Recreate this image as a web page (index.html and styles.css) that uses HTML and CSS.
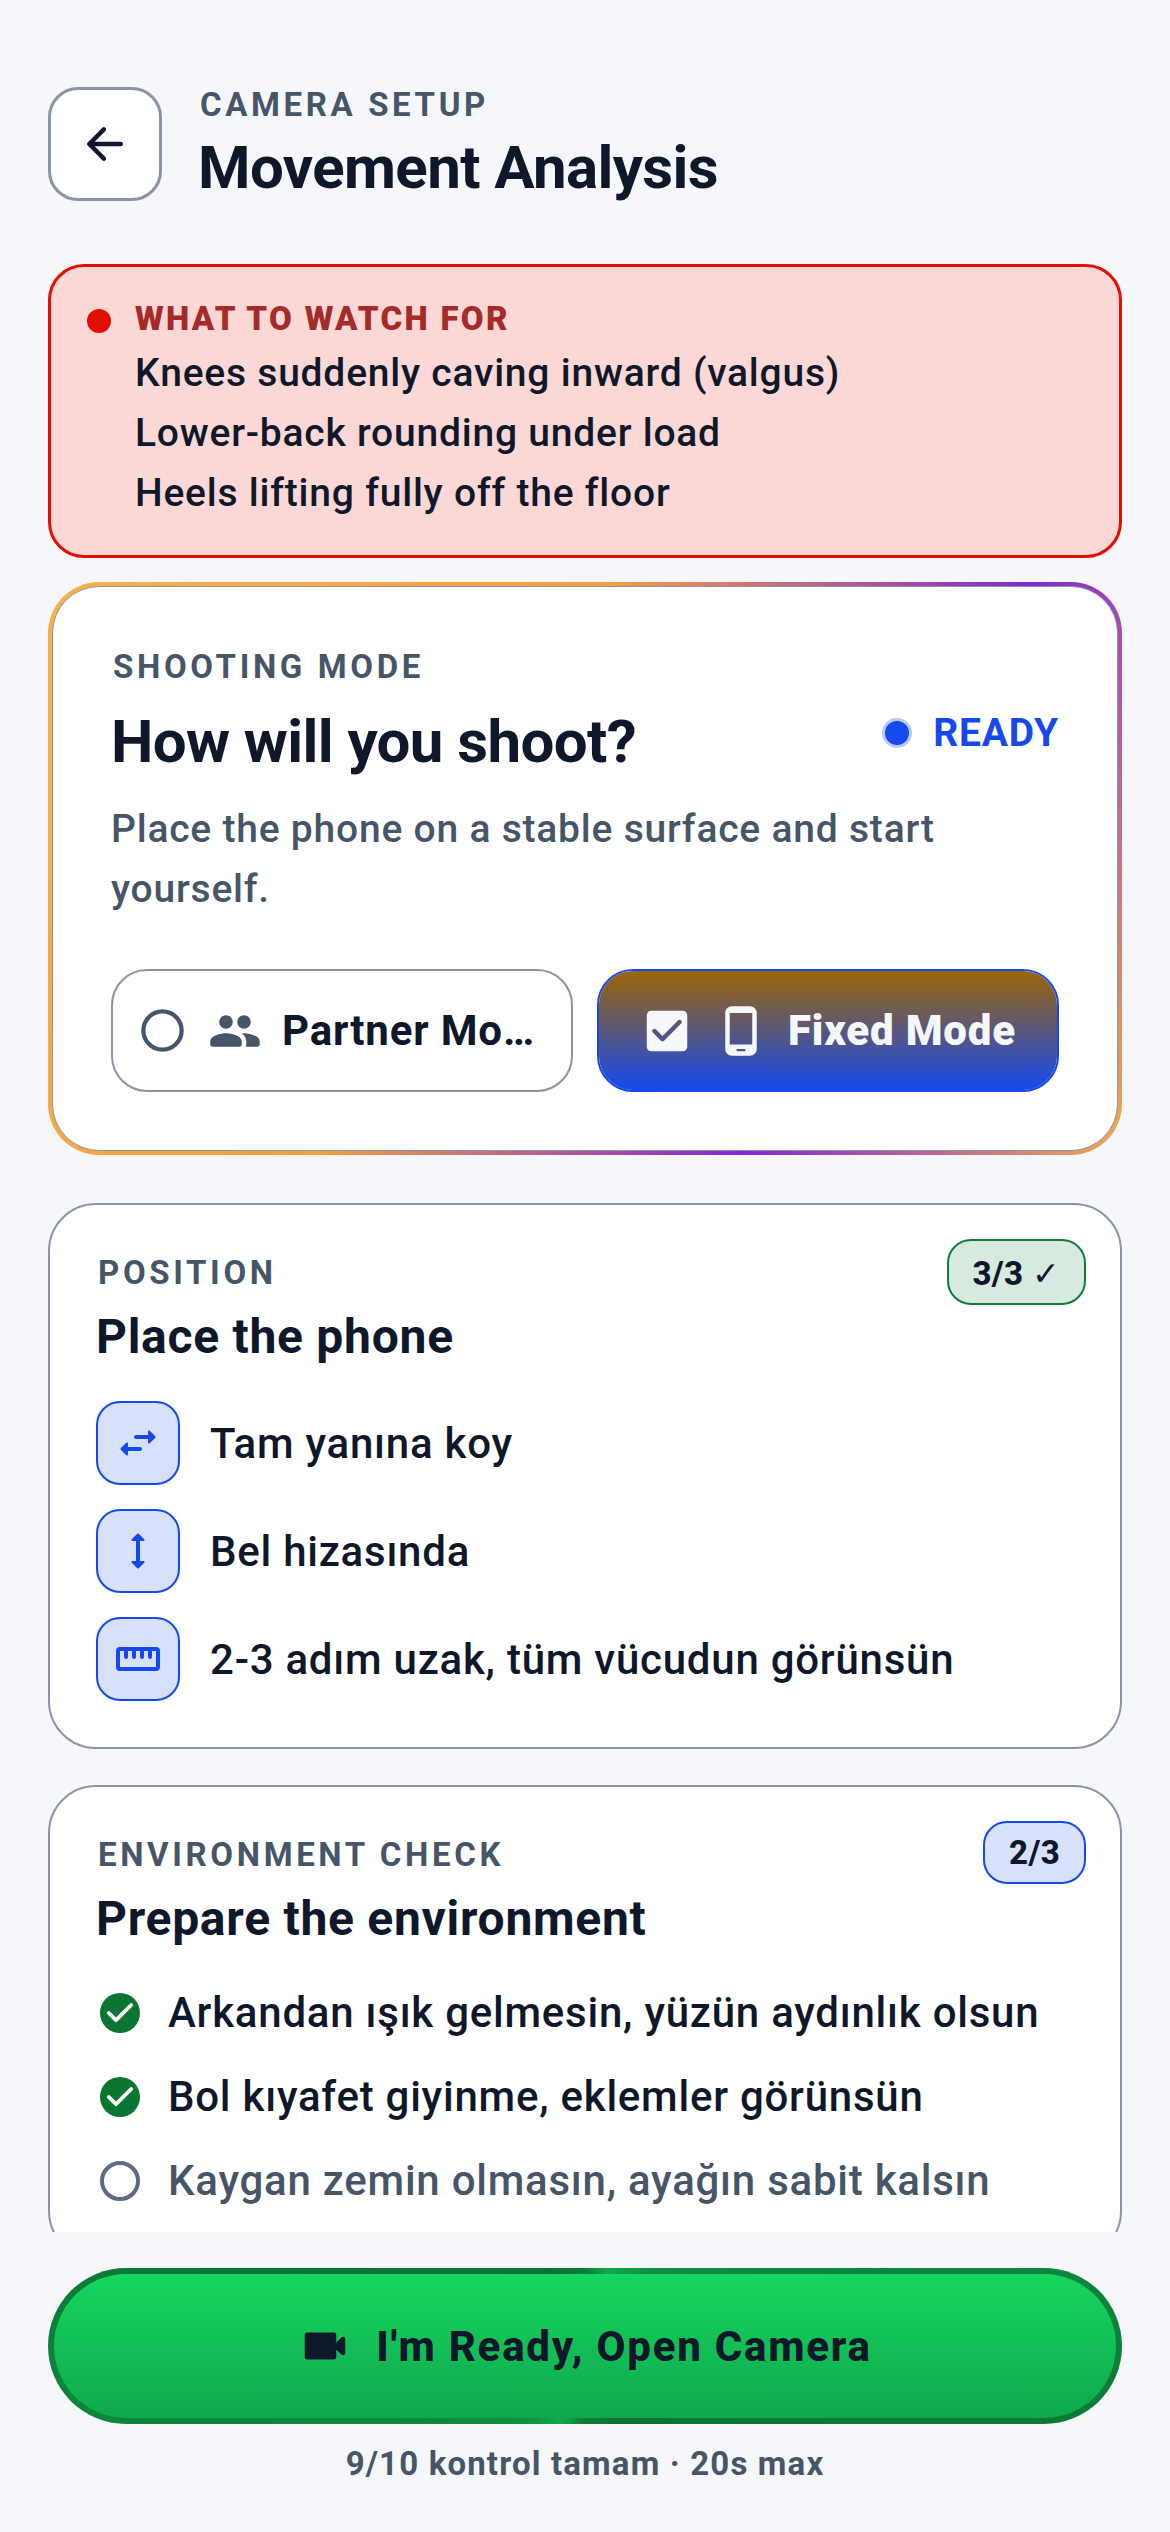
FILE: index.html
```html
<!DOCTYPE html>
<html lang="en">
<head>
  <meta charset="UTF-8" />
  <meta name="viewport" content="width=device-width, initial-scale=1.0"/>
  <title>Movement Analysis - Camera Setup</title>
  <link rel="stylesheet" href="styles.css">
</head>
<body>

  <header class="top-bar">
    <button class="back-btn" type="button" aria-label="Back">
      <svg viewBox="0 0 24 24" class="icon"><path d="M19 12H5.500M11.500 5.500L5 12l6.500 6.500" fill="none" stroke="currentColor" stroke-width="2" stroke-linecap="round" stroke-linejoin="round"/></svg>
    </button>
    <div>
      <p class="eyebrow">CAMERA SETUP</p>
      <h1 class="title">Movement Analysis</h1>
    </div>
  </header>

  <main class="content">

    <section class="alert">
      <span class="alert-dot"></span>
      <div>
        <h2 class="alert-title">WHAT TO WATCH FOR</h2>
        <ul class="alert-list">
          <li>Knees suddenly caving inward (valgus)</li>
          <li>Lower-back rounding under load</li>
          <li>Heels lifting fully off the floor</li>
        </ul>
      </div>
    </section>

    <!-- shooting mode -->
    <section class="glow">
      <div class="glow-inner">
        <p class="eyebrow">SHOOTING MODE</p>
        <div class="mode-head">
          <h2 class="title">How will you shoot?</h2>
          <span class="ready"><span class="ready-dot"></span>READY</span>
        </div>
        <p class="mode-desc">Place the phone on a stable surface and start yourself.</p>
        <div class="modes">
          <label class="mode">
            <input type="radio" name="mode" value="partner">
            <svg viewBox="0 0 24 24" class="mark-off"><circle cx="12" cy="12" r="9" fill="none" stroke="currentColor" stroke-width="2"/></svg>
            <svg viewBox="0 0 24 24" class="icon"><path fill="currentColor" d="M16 11c1.660 0 2.990-1.340 2.990-3S17.660 5 16 5s-3 1.340-3 3 1.340 3 3 3zm-8 0c1.660 0 2.990-1.340 2.990-3S9.660 5 8 5 5 6.340 5 8s1.340 3 3 3zm0 2c-2.330 0-7 1.170-7 3.500V18c0 .55.45 1 1 1h12c.55 0 1-.45 1-1v-1.500c0-2.330-4.670-3.500-7-3.500zm8 0c-.29 0-.62.02-.97.05.02.01.03.03.04.04 1.140.83 1.930 1.940 1.930 3.410V18c0 .35-.07.69-.18 1H22c.55 0 1-.45 1-1v-1.500c0-2.330-4.670-3.500-7-3.500z"/></svg>
            <span class="mode-name">Partner Mode</span>
          </label>
          <label class="mode mode-on">
            <input type="radio" name="mode" value="fixed" checked>
            <svg viewBox="0 0 24 24" class="icon"><path fill="currentColor" fill-rule="evenodd" d="M19 3H5c-1.100 0-2 .9-2 2v14c0 1.100.9 2 2 2h14c1.100 0 2-.9 2-2V5c0-1.100-.9-2-2-2zm-8.290 13.290c-.39.39-1.020.39-1.410 0L5.710 12.700c-.39-.39-.39-1.020 0-1.410.39-.39 1.020-.39 1.410 0L10 14.170l6.880-6.880c.39-.39 1.020-.39 1.410 0 .39.39.39 1.020 0 1.410l-7.580 7.590z"/></svg>
            <svg viewBox="0 0 24 24" class="icon"><path fill="currentColor" fill-rule="evenodd" d="M16 1H8C6.340 1 5 2.340 5 4v16c0 1.660 1.340 3 3 3h8c1.660 0 3-1.340 3-3V4c0-1.660-1.340-3-3-3zm-2.500 20h-3c-.28 0-.5-.22-.5-.5s.22-.5.5-.5h3c.28 0 .5.22.5.5s-.22.5-.5.5zm3.500-3H7V4h10v14z"/></svg>
            <span class="mode-name">Fixed Mode</span>
          </label>
        </div>
      </div>
    </section>

    <!-- position -->
    <section class="card">
      <span class="badge badge-done">3/3 ✓</span>
      <p class="eyebrow">POSITION</p>
      <h2 class="card-title">Place the phone</h2>
      <ul class="tips">
        <li>
          <span class="tile"><svg viewBox="0 0 24 24"><path fill="currentColor" d="M6.140 11.860l-2.780 2.790c-.19.2-.19.51 0 .71l2.780 2.790c.31.32.85.09.85-.35V16H13c.55 0 1-.45 1-1s-.45-1-1-1H6.990v-1.790c0-.45-.54-.67-.85-.35zm14.510-3.210l-2.780-2.790c-.31-.32-.85-.09-.85.35V8H11c-.55 0-1 .45-1 1s.45 1 1 1h6.010v1.790c0 .45.54.67.85.35l2.780-2.790c.2-.19.2-.51.01-.7z"/></svg></span>
          Tam yanına koy
        </li>
        <li>
          <span class="tile"><svg viewBox="0 0 24 24"><path fill="currentColor" d="M13 6.990h1.790c.45 0 .67-.54.35-.85l-2.790-2.780c-.2-.19-.51-.19-.71 0L8.860 6.140c-.32.31-.1.85.35.85H11v10.020H9.210c-.45 0-.67.54-.35.85l2.790 2.780c.2.19.51.19.71 0l2.790-2.780c.32-.31.09-.85-.35-.85H13V6.990z"/></svg></span>
          Bel hizasında
        </li>
        <li>
          <span class="tile"><svg viewBox="0 0 24 24"><g fill="none" stroke="currentColor" stroke-width="2"><rect x="2" y="7" width="20" height="10" rx="1"/><path stroke-linecap="round" d="M6 7.500V11M10 7.500V11M14 7.500V11M18 7.500V11"/></g></svg></span>
          2-3 adım uzak, tüm vücudun görünsün
        </li>
      </ul>
    </section>

    <!-- environment -->
    <section class="card">
      <span class="badge">2/3</span>
      <p class="eyebrow">ENVIRONMENT CHECK</p>
      <h2 class="card-title">Prepare the environment</h2>
      <div class="checks">
        <label class="check">
          <input type="checkbox" checked>
          <svg viewBox="0 0 24 24"><circle cx="12" cy="12" r="10" fill="currentColor"/><path d="M6.400 12l3.600 3.600 7.600-7.600" fill="none" stroke="#fff" stroke-width="1.900" stroke-linecap="round" stroke-linejoin="round"/></svg>
          Arkandan ışık gelmesin, yüzün aydınlık olsun
        </label>
        <label class="check">
          <input type="checkbox" checked>
          <svg viewBox="0 0 24 24"><circle cx="12" cy="12" r="10" fill="currentColor"/><path d="M6.400 12l3.600 3.600 7.600-7.600" fill="none" stroke="#fff" stroke-width="1.900" stroke-linecap="round" stroke-linejoin="round"/></svg>
          Bol kıyafet giyinme, eklemler görünsün
        </label>
        <label class="check check-off">
          <input type="checkbox">
          <svg viewBox="0 0 24 24"><circle cx="12" cy="12" r="9" fill="none" stroke="currentColor" stroke-width="2"/></svg>
          Kaygan zemin olmasın, ayağın sabit kalsın
        </label>
      </div>
    </section>

  </main>

  <footer class="bottom-bar">
    <button class="start-btn" type="button">
      <svg viewBox="0 0 24 24" class="icon"><path fill="currentColor" d="M17 10.500V7c0-.55-.45-1-1-1H4c-.55 0-1 .45-1 1v10c0 .55.45 1 1 1h12c.55 0 1-.45 1-1v-3.500l2.290 2.290c.63.63 1.710.18 1.710-.71V8.910c0-.89-1.080-1.340-1.710-.71L17 10.500z"/></svg>
      I'm Ready, Open Camera
    </button>
    <p class="status">9/10 kontrol tamam · 20s max</p>
  </footer>

</body>
</html>
```
FILE: styles.css
```css
:root {
  --bg: #f5f7fb;
  --ink: #0f172a;
  --muted: #475569;
  --line: #8a94a6;
  --blue: #1549ee;
  --blue-soft: #d8e1fc;
  --green: #0b7534;
  --red: #e30d00;
}

* {
  box-sizing: border-box;
}

body {
  margin: 0;
  height: 100vh;
  display: flex;
  flex-direction: column;
  background: var(--bg);
  color: var(--ink);
  font-family: Roboto, "DejaVu Sans", sans-serif;
}

h1, h2, p, ul {
  margin: 0;
  padding: 0;
}

ul {
  list-style: none;
}

button {
  font-family: inherit;
  cursor: pointer;
}

svg {
  display: block;
  flex: none;
}

.icon {
  width: 54px;
  height: 54px;
}

/* header */
.top-bar {
  display: flex;
  align-items: center;
  gap: 36px;
  padding: 81px 48px 57px;
}

.back-btn {
  width: 114px;
  height: 114px;
  display: flex;
  align-items: center;
  justify-content: center;
  padding: 0;
  background: #fff;
  color: var(--ink);
  border: 3px solid var(--line);
  border-radius: 30px;
}

.eyebrow {
  padding-left: 2px;
  font-size: 33px;
  line-height: 48px;
  font-weight: 700;
  letter-spacing: 0.11em;
  color: var(--muted);
}

.title {
  font-size: 60px;
  line-height: 78px;
  font-weight: 700;
  letter-spacing: -0.01em;
}

.content {
  flex: 1;
  min-height: 0;
  overflow-y: auto;
  scrollbar-width: none;
  padding: 0 48px;
}

/* warning box */
.alert {
  display: flex;
  gap: 24px;
  padding: 28px 36px 32px;
  background: #fbd7d5;
  border: 3px solid var(--red);
  border-radius: 36px;
}

.alert-dot {
  flex: none;
  width: 24px;
  height: 24px;
  margin-top: 14px;
  border-radius: 50%;
  background: var(--red);
}

.alert-title {
  font-size: 33px;
  line-height: 48px;
  font-weight: 900;
  letter-spacing: 0.07em;
  color: #a52a2a;
}

.alert-list {
  font-size: 39px;
  line-height: 60px;
  font-weight: 500;
  letter-spacing: 0.02em;
}

/* shooting mode card with gradient ring */
.glow {
  margin-top: 24px;
  padding: 4px;
  border-radius: 51px;
  background: linear-gradient(117deg, #f8b14a 0%, #f59f40 41%, #8126d8 72%, #f4a94f 100%);
}

.glow-inner {
  padding: 56px 58px 58px;
  background: #fff;
  border: 1px solid var(--line);
  border-radius: 47px;
}

.mode-head {
  display: flex;
  justify-content: space-between;
  align-items: flex-start;
  margin: 12px 0 18px;
}

.ready {
  display: flex;
  align-items: center;
  gap: 24px;
  font-size: 39px;
  line-height: 60px;
  font-weight: 700;
  letter-spacing: 0.02em;
  color: var(--blue);
}

.ready-dot {
  width: 24px;
  height: 24px;
  border-radius: 50%;
  background: var(--blue);
  box-shadow: 0 0 0 3px #b9c8fa;
}

.mode-desc {
  font-size: 39px;
  line-height: 60px;
  font-weight: 500;
  letter-spacing: 0.02em;
  color: var(--muted);
}

.modes {
  display: grid;
  grid-template-columns: 1fr 1fr;
  gap: 24px;
  margin-top: 50px;
}

.mode {
  position: relative;
  min-width: 0;
  height: 123px;
  display: flex;
  align-items: center;
  gap: 20px;
  padding: 0 24px;
  border: 2px solid var(--line);
  border-radius: 36px;
  color: var(--muted);
  cursor: pointer;
}

.mode input,
.check input {
  position: absolute;
  margin: 0;
  opacity: 0;
}

.mark-off {
  width: 51px;
  height: 51px;
}

.mode-name {
  min-width: 0;
  overflow: hidden;
  text-overflow: ellipsis;
  white-space: nowrap;
  font-size: 42px;
  line-height: 60px;
  font-weight: 700;
  letter-spacing: 0.02em;
  color: var(--ink);
}

.mode-on {
  justify-content: center;
  color: var(--bg);
  border-color: var(--blue);
  background: linear-gradient(180deg, #9c6507, var(--blue)) padding-box;
}

.mode-on .mode-name {
  font-weight: 900;
  color: var(--bg);
}

/* cards */
.card {
  position: relative;
  margin-top: 36px;
  padding: 44px 46px 46px;
  background: #fff;
  border: 2px solid var(--line);
  border-radius: 48px;
}

.glow + .card {
  margin-top: 48px;
}

.card-title {
  margin: 10px 0 34px;
  font-size: 48px;
  line-height: 60px;
  font-weight: 700;
  letter-spacing: 0.015em;
}

.badge {
  position: absolute;
  top: 34px;
  right: 34px;
  padding: 10px 24px;
  font-size: 33px;
  line-height: 39px;
  font-weight: 800;
  letter-spacing: 0.01em;
  background: var(--blue-soft);
  border: 2px solid var(--blue);
  border-radius: 24px;
}

.badge-done {
  padding-top: 13px;
  background: #d8e9df;
  border-color: #0f7d3c;
}

.tips {
  display: flex;
  flex-direction: column;
  gap: 24px;
}

.tips li {
  display: flex;
  align-items: center;
  gap: 30px;
  font-size: 42px;
  font-weight: 500;
  letter-spacing: 0.018em;
}

.tile {
  width: 84px;
  height: 84px;
  display: flex;
  align-items: center;
  justify-content: center;
  background: var(--blue-soft);
  border: 2px solid var(--blue);
  border-radius: 24px;
  color: var(--blue);
}

.tile svg,
.check svg {
  width: 48px;
  height: 48px;
}

.checks {
  display: flex;
  flex-direction: column;
  gap: 24px;
}

.check {
  position: relative;
  display: flex;
  align-items: center;
  gap: 24px;
  font-size: 42px;
  line-height: 60px;
  font-weight: 500;
  letter-spacing: 0.018em;
  cursor: pointer;
}

.check svg {
  color: var(--green);
}

.check-off {
  color: var(--muted);
}

.check-off svg {
  color: #5b6b82;
}

/* footer */
.bottom-bar {
  padding: 36px 48px 44px;
}

.start-btn {
  width: 100%;
  height: 156px;
  display: flex;
  align-items: center;
  justify-content: center;
  gap: 24px;
  border: 6px solid transparent;
  border-radius: 78px;
  background:
    linear-gradient(180deg, #15d65f, #10a84c) padding-box,
    conic-gradient(from 17deg, #10a84c 0deg, #0d8f42 25deg, #0c853d 65deg, #0b7836 85deg, #0b7233 140deg, #0c8039 165deg, #10a84c 180deg, #0d8f42 205deg, #0c853d 245deg, #0b7836 265deg, #0b7233 320deg, #0c8039 345deg, #10a84c 360deg) border-box;
  color: var(--ink);
  font-size: 42px;
  font-weight: 800;
  letter-spacing: 0.042em;
}

.status {
  margin-top: 16px;
  font-size: 33px;
  line-height: 48px;
  font-weight: 700;
  letter-spacing: 0.035em;
  text-align: center;
  color: var(--muted);
}
```
